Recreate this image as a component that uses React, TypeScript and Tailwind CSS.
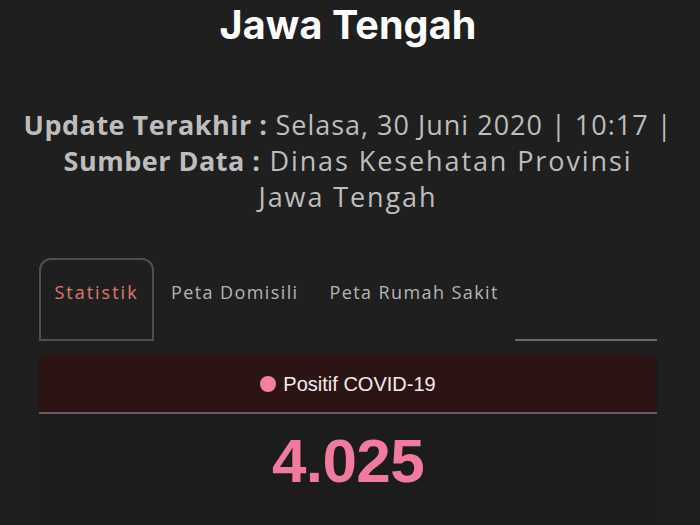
export default function App() {
  const tabs = ["Statistik", "Peta Domisili", "Peta Rumah Sakit"];

  return (
    <div className="min-h-screen h-[525px] overflow-hidden bg-[#1f1f1f]">
      <div className="w-[618px] ml-[39px]">
        {/* judul */}
        <h1 className="h-[50px] text-center text-[39.5px] leading-[50px] font-bold text-white font-['Inter',sans-serif] tracking-[0.1px]">
          Jawa Tengah
        </h1>

        {/* info update */}
        <div className="mt-[57px] -mx-[40px] text-center text-[27px] leading-[36px] tracking-[1.9px] text-[#bdbdbd] font-['Open_Sans',sans-serif]">
          <p className="tracking-[1px]">
            <span className="font-bold tracking-[0.5px]">Update Terakhir :</span> Selasa, 30 Juni 2020 | 10:17 |
          </p>
          <p>
            <span className="font-bold tracking-[0.5px]">Sumber Data :</span> Dinas Kesehatan Provinsi
          </p>
          <p>Jawa Tengah</p>
        </div>

        {/* tab */}
        <div className="mt-[43px] flex items-end h-[83px]">
          {tabs.map((t, i) => (
            <div
              key={t}
              className={
                i === 0
                  ? "h-[83px] w-[115px] flex items-center justify-center pb-[15px] rounded-t-[12px] border-2 border-[#4f4f4f] text-[#e0776f]"
                  : "h-[83px] flex items-center pb-[15px] text-[#b5b5b5] " + (i === 1 ? "pl-[17px] pr-[31px]" : "")
              }
            >
              <span className={"text-[18px] font-['Open_Sans',sans-serif] " + (i === 0 ? "tracking-[2px]" : "tracking-[1.4px]")}>{t}</span>
            </div>
          ))}
          <div className="flex-1" />
          <div className="w-[142px] h-[2px] bg-[#6b6b6b]" />
        </div>

        {/* kartu */}
        <div className="mt-[14px] rounded-[8px] bg-[#1c1c1c] overflow-hidden">
          <div className="h-[59px] bg-[#2d1414] border-b-2 border-[#6b5a5e] flex items-center justify-center gap-[7px] font-['Liberation_Sans',sans-serif]">
            <span className="w-[16px] h-[16px] rounded-full bg-[#f67ea0]" />
            <span className="text-[20px] text-[#f2ecec] tracking-[0px]">Positif COVID-19</span>
          </div>
          <div className="pt-[11px] pb-[30px] text-center">
            <span className="text-[62px] leading-[72px] font-bold text-[#f27a9f] font-['Liberation_Sans',sans-serif] tracking-[-0.6px]">
              4.025
            </span>
          </div>
        </div>
      </div>
    </div>
  );
}
